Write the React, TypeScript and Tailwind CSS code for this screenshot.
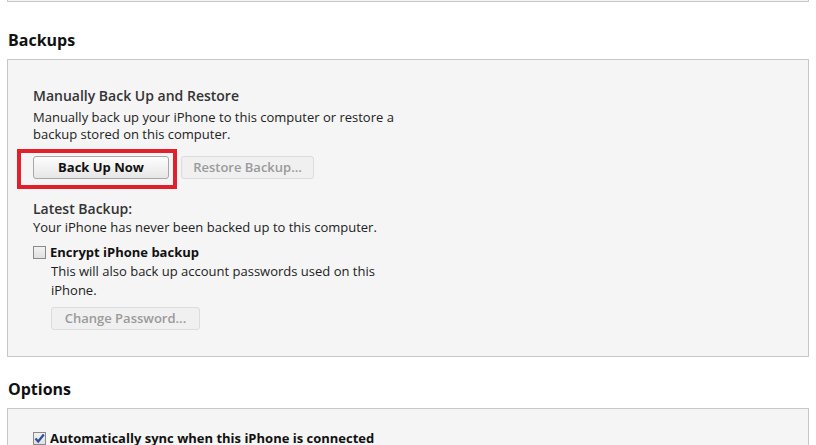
import React from "react";

const font = { fontFamily: '"Open Sans", "Noto Sans", sans-serif' };

const Button: React.FC<{ label: string; disabled?: boolean; width: string }> = ({ label, disabled, width }) => (
  <div
    className={`${width} h-[23px] flex items-center justify-center rounded-[3px] border text-[13px] ${
      disabled
        ? "font-semibold border-[#dcdcdc] bg-[#f0f0f0] text-[#9a9a9a]"
        : "font-bold border-[#a8a8a8] bg-gradient-to-b from-[#fdfdfd] to-[#e6e6e6] text-[#111]"
    }`}
  >
    {label}
  </div>
);

const Checkbox: React.FC<{ checked?: boolean }> = ({ checked }) => (
  <div className="w-[13px] h-[13px] border border-[#8a8a8a] bg-gradient-to-b from-[#f2f2f2] to-[#e0e0e0] flex items-center justify-center">
    {checked && (
      <svg width="11" height="11" viewBox="0 0 11 11">
        <path d="M1.5 5.5 L4.2 8.5 L9.8 1.5" fill="none" stroke="#2b4f9e" strokeWidth="2.2" />
      </svg>
    )}
  </div>
);

export default function App() {
  return (
    <div className="w-[816px] h-[445px] bg-white overflow-hidden text-[#222]" style={font}>
      <div className="px-[7px]">
        {/* previous panel edge */}
        <div className="w-[802px] h-[2px] bg-[#f5f5f5] border-x border-b border-[#c8c8c8]" />

        <h2 className="mt-[27px] ml-[1px] text-[16px] leading-[22px] font-bold text-[#111]">Backups</h2>

        <div className="mt-[8px] w-[802px] h-[298px] bg-[#f5f5f5] border border-[#c8c8c8] pl-[25px] pt-[26px]">
          <div className="text-[14px] leading-[20px] font-semibold text-[#333]">Manually Back Up and Restore</div>
          <div className="mt-[3px] text-[13px] leading-[17px] w-[395px]">
            Manually back up your iPhone to this computer or restore a backup stored on this computer.
          </div>

          <div className="mt-[13px] flex gap-[12px]">
            <div className="relative">
              <Button label="Back Up Now" width="w-[136px]" />
              <div className="absolute left-[-16px] top-[-7px] w-[160px] h-[40px] border-[4px] border-[#e2202c]" />
            </div>
            <Button label="Restore Backup..." disabled width="w-[133px]" />
          </div>

          <div className="mt-[20px] text-[14px] leading-[20px] font-semibold text-[#333]">Latest Backup:</div>
          <div className="text-[13px] leading-[17px]">Your iPhone has never been backed up to this computer.</div>

          <div className="mt-[8px] flex items-center gap-[4px]">
            <Checkbox />
            <span className="text-[13px] leading-[17px] font-bold text-[#111]">Encrypt iPhone backup</span>
          </div>
          <div className="ml-[18px] mt-[1px] w-[345px] text-[13px] leading-[19px]">
            This will also back up account passwords used on this iPhone.
          </div>
          <div className="ml-[18px] mt-[7px]">
            <Button label="Change Password..." disabled width="w-[149px]" />
          </div>
        </div>

        <h2 className="mt-[21px] ml-[1px] text-[16px] leading-[22px] font-bold text-[#111]">Options</h2>

        <div className="mt-[8px] w-[802px] h-[80px] bg-[#f5f5f5] border border-[#c8c8c8] pl-[25px] pt-[21px]">
          <div className="flex items-center gap-[4px]">
            <Checkbox checked />
            <span className="text-[13px] leading-[17px] font-bold text-[#111]">
              Automatically sync when this iPhone is connected
            </span>
          </div>
        </div>
      </div>
    </div>
  );
}
